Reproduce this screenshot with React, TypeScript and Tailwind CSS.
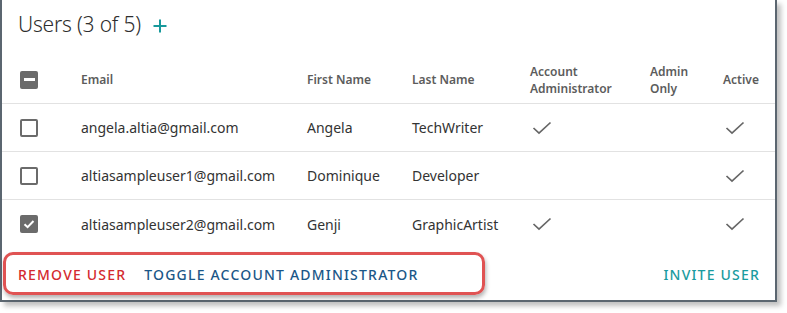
import React from 'react';

type User = {
  email: string;
  first: string;
  last: string;
  accountAdmin: boolean;
  adminOnly: boolean;
  active: boolean;
  selected: boolean;
};

const users: User[] = [
  { email: 'angela.altia@gmail.com', first: 'Angela', last: 'TechWriter', accountAdmin: true, adminOnly: false, active: true, selected: false },
  { email: 'altiasampleuser1@gmail.com', first: 'Dominique', last: 'Developer', accountAdmin: false, adminOnly: false, active: true, selected: false },
  { email: 'altiasampleuser2@gmail.com', first: 'Genji', last: 'GraphicArtist', accountAdmin: true, adminOnly: false, active: true, selected: true },
];

const cols = 'grid grid-cols-[61px_226px_105px_118px_120px_73px_1fr] items-center pl-[18px]';

function Box({ state }: { state: 'off' | 'on' | 'mixed' }) {
  if (state === 'off') {
    return <div className="w-[18px] h-[18px] rounded-[2px] border-2 border-[#6b6b6b]" />;
  }
  return (
    <div className="w-[18px] h-[18px] rounded-[2px] bg-[#6b6b6b] flex items-center justify-center">
      {state === 'on' ? (
        <svg width="14" height="14" viewBox="0 0 14 14" fill="none">
          <path d="M2.5 7.2 L5.6 10.2 L11.5 4" stroke="white" strokeWidth="2" />
        </svg>
      ) : (
        <div className="w-[11px] h-[2.5px] bg-white" />
      )}
    </div>
  );
}

function Tick() {
  return (
    <svg width="20" height="14" viewBox="0 0 20 14" fill="none" className="ml-[2px]">
      <path d="M1.5 7 L7 12.2 L18.5 1.5" stroke="#666" strokeWidth="1.7" />
    </svg>
  );
}

export default function App() {
  return (
    <div className="w-[787px] h-[313px] bg-white relative" style={{ fontFamily: '"Noto Sans", "Open Sans", sans-serif' }}>
      <div className="w-[777px] h-[302px] border-l-2 border-r-2 border-b-2 border-[#5b6670] shadow-[4px_4px_5px_rgba(0,0,0,0.25)] bg-white flex flex-col">
        {/* title */}
        <div className="h-[56px] pl-[16px] pt-[9px] flex items-start gap-[12px]">
          <span className="text-[21px] text-[#2e2e2e] font-light tracking-[-0.2px]">Users (3 of 5)</span>
          <svg width="14" height="14" viewBox="0 0 14 14" className="mt-[10px]">
            <path d="M7 0.5 V13.5 M0.5 7 H13.5" stroke="#17999b" strokeWidth="2" />
          </svg>
        </div>

        {/* header */}
        <div className={`${cols} h-[48px] border-b border-[#e2e2e2] text-[12px] font-semibold text-[#5c5c5c] leading-[17px]`}>
          <Box state="mixed" />
          <span>Email</span>
          <span>First Name</span>
          <span>Last Name</span>
          <span>Account<br />Administrator</span>
          <span>Admin<br />Only</span>
          <span>Active</span>
        </div>

        {/* rows */}
        {users.map((u, i) => (
          <div
            key={u.email}
            className={`${cols} h-[48px] text-[14px] text-[#333] ${i < users.length - 1 ? 'border-b border-[#e2e2e2]' : ''}`}
          >
            <Box state={u.selected ? 'on' : 'off'} />
            <span>{u.email}</span>
            <span>{u.first}</span>
            <span>{u.last}</span>
            <span>{u.accountAdmin && <Tick />}</span>
            <span>{u.adminOnly && <Tick />}</span>
            <span>{u.active && <Tick />}</span>
          </div>
        ))}

        {/* footer actions */}
        <div className="flex-1 flex items-center pl-[16px] pr-[15px] text-[14px] font-medium tracking-[1.2px]">
          <span className="text-[#d42a2f]">REMOVE USER</span>
          <span className="ml-[18px] text-[#1b5788]">TOGGLE ACCOUNT ADMINISTRATOR</span>
          <span className="ml-auto text-[#1a9ba0]">INVITE USER</span>
        </div>
      </div>

      {/* annotation highlight */}
      <div className="absolute left-[3px] top-[252px] w-[482px] h-[43px] rounded-[10px] border-[3px] border-[#e05353] shadow-[1px_3px_4px_rgba(0,0,0,0.3)]" />
    </div>
  );
}
